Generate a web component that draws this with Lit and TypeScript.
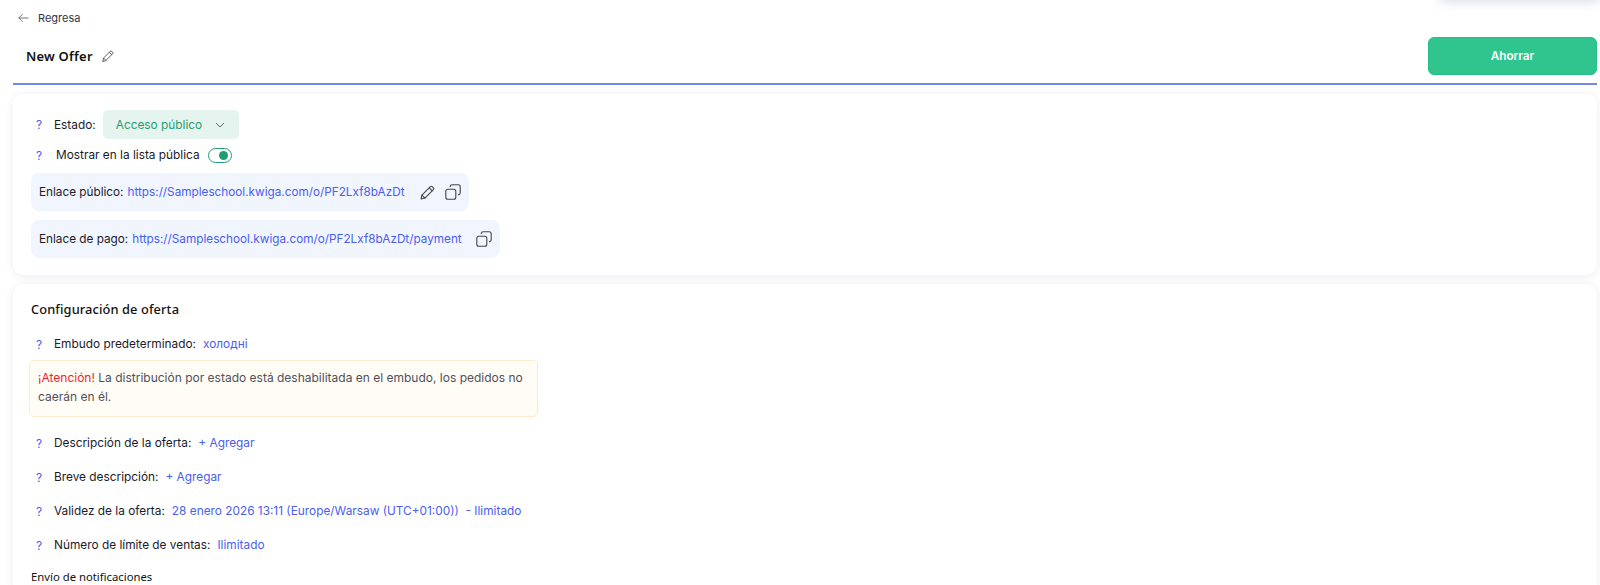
import { LitElement, html, css, svg } from 'lit';
import { customElement } from 'lit/decorators.js';

const pencil = (size: number) => html`<svg class="ico" width=${size} height=${size} viewBox="1 1 14 14" fill="none" stroke="currentColor" stroke-width="1" stroke-linejoin="round" stroke-linecap="round">
  ${svg`<path d="M2 14l.8-3.6 7.9-7.9a1.2 1.2 0 0 1 1.7 0l1.1 1.1a1.2 1.2 0 0 1 0 1.7l-7.9 7.9z"/><path d="M9.6 3.6l2.8 2.8"/><path d="M2.8 10.4l2.8 2.8"/>`}
</svg>`;

const copy = html`<svg class="ico" width="16" height="16" viewBox="0 0 16 16" fill="none" stroke="currentColor" stroke-width="1.1" stroke-linejoin="round">
  ${svg`<rect x="0.8" y="5.2" width="10" height="10" rx="2"/><path d="M5.2 3V2.6a2 2 0 0 1 2-1.8h6a2 2 0 0 1 2 2v6a2 2 0 0 1-1.8 2H13"/>`}
</svg>`;

@customElement('app-root')
export class AppRoot extends LitElement {
  static styles = css`
    :host {
      display: block;
      position: relative;
      height: 585px;
      overflow: hidden;
      background: #fff;
      font-family: Inter, 'Liberation Sans', sans-serif;
      font-size: 11.85px;
      color: #1b1b2a;
    }
    .popup {
      position: absolute;
      right: 0;
      top: -40px;
      width: 160px;
      height: 40px;
      box-shadow: 0 2px 10px rgba(90, 110, 170, 0.22);
    }
    .back {
      display: flex;
      align-items: center;
      gap: 9px;
      height: 35px;
      padding-left: 18px;
      font-size: 11px;
      color: #33333f;
    }
    .head {
      display: flex;
      align-items: center;
      justify-content: space-between;
      height: 42px;
      margin: 0 3px 0 13px;
      padding: 0 0 6px 13px;
      border-bottom: 2px solid #7286f2;
    }
    .title {
      display: flex;
      align-items: center;
      gap: 9px;
      font-family: 'Noto Sans', sans-serif;
      font-size: 13px;
      font-weight: 600;
      color: #111;
      letter-spacing: 0.2px;
    }
    .title .ico { color: #444; }
    .save {
      width: 169px;
      height: 38px;
      box-sizing: border-box;
      border: 1px solid #27bd85;
      border-radius: 6px;
      background: #30c58e;
      color: #fff;
      font: 600 11.7px Inter, sans-serif;
      display: flex;
      align-items: center;
      justify-content: center;
    }
    .card {
      margin: 9px 3px 0 13px;
      border-radius: 10px;
      background: #fff;
      box-shadow: 0 1px 8px rgba(60, 70, 110, 0.1);
      padding-left: 18px;
    }
    .card.first {
      height: 181px;
      padding-top: 16px;
      box-sizing: border-box;
    }
    .row {
      display: flex;
      align-items: center;
    }
    .q {
      width: 23px;
      padding-left: 5px;
      box-sizing: border-box;
      color: #4a5ef0;
      font-size: 12px;
    }
    .status { height: 29px; }
    .select {
      display: flex;
      align-items: center;
      gap: 13px;
      height: 29px;
      margin-left: 7px;
      padding: 0 14px 0 13px;
      border-radius: 5px;
      background: #e6f4ef;
      color: #1f9e70;
    }
    .select svg { color: #55706a; }
    .public { height: 24px; margin-top: 4px; }
    .public .q { width: 25px; }
    .toggle {
      position: relative;
      width: 24px;
      height: 15px;
      margin-left: 8px;
      box-sizing: border-box;
      border: 1px solid #1f9e70;
      border-radius: 8px;
    }
    .toggle::after {
      content: '';
      position: absolute;
      right: 3px;
      top: 2px;
      width: 9px;
      height: 9px;
      border-radius: 50%;
      background: #1f9e70;
    }
    .links {
      display: flex;
      flex-direction: column;
      align-items: flex-start;
      gap: 9px;
      margin-top: 6px;
    }
    .link {
      display: flex;
      align-items: center;
      gap: 4px;
      height: 38px;
      padding: 0 8px 0 8px;
      border-radius: 8px;
      background: #f1f5fe;
      font-size: 11.75px;
    }
    a { color: #4a5ef0; text-decoration: none; white-space: pre; }
    .link .ico { display: block; color: #444; }
    .link .first-ico { margin-left: 11px; }
    .link .next-ico { margin-left: 6px; }
    .link .only-ico { margin-left: 10px; }
    .card.second {
      height: 310px;
      padding-top: 16px;
      box-sizing: border-box;
    }
    h2 {
      margin: 0;
      font-family: 'Noto Sans', sans-serif;
      font-size: 12.8px;
      font-weight: 500;
      color: #111;
      letter-spacing: 0.12px;
    }
    .opt { height: 18px; }
    .opt .label { margin-right: 7px; }
    .funnel { margin-top: 17px; }
    .alert {
      width: 509px;
      height: 57px;
      margin: 7px 0 17px -2px;
      padding: 8px;
      box-sizing: border-box;
      border: 1px solid #fdeccb;
      border-radius: 5px;
      background: #fffdf6;
      color: #50505c;
      font-size: 12px;
      line-height: 18.5px;
    }
    .alert b { color: #ee1c36; font-weight: 400; }
    .gap { margin-top: 16px; }
    .sub {
      margin-top: 15px;
      font-size: 11.3px;
      color: #111;
      font-family: 'Noto Sans', sans-serif;
      line-height: 16px;
    }
  `;

  private option(label: string, value: string, extra = '') {
    return html`<div class="row opt ${extra}">
      <span class="q">?</span><span class="label">${label}</span><a>${value}</a>
    </div>`;
  }

  render() {
    return html`
      <div class="popup"></div>
      <div class="back">
        <svg width="11" height="10" viewBox="0 0 11 10" fill="none" stroke="#666" stroke-width="0.9">
          <path d="M10.5 5H.8M4.6 1.2L.8 5l3.8 3.8" />
        </svg>
        Regresa
      </div>
      <div class="head">
        <div class="title">New Offer ${pencil(12)}</div>
        <div class="save">Ahorrar</div>
      </div>
      <div class="card first">
        <div class="row status">
          <span class="q">?</span>Estado:
          <div class="select">
            Acceso público
            <svg width="10" height="6" viewBox="0 0 10 6" fill="none" stroke="currentColor" stroke-width="1"><path d="M1 1l4 4 4-4" /></svg>
          </div>
        </div>
        <div class="row public">
          <span class="q">?</span>Mostrar en la lista pública
          <span class="toggle"></span>
        </div>
        <div class="links">
          <div class="link">
            <span>Enlace público:</span><a>https://Sampleschool.kwiga.com/o/PF2Lxf8bAzDt</a>
            <span class="first-ico">${pencil(15)}</span>
            <span class="next-ico">${copy}</span>
          </div>
          <div class="link">
            <span>Enlace de pago:</span><a>https://Sampleschool.kwiga.com/o/PF2Lxf8bAzDt/payment</a>
            <span class="only-ico">${copy}</span>
          </div>
        </div>
      </div>
      <div class="card second">
        <h2>Configuración de oferta</h2>
        ${this.option('Embudo predeterminado:', 'холодні', 'funnel')}
        <div class="alert"><b>¡Atención!</b> La distribución por estado está deshabilitada en el embudo, los pedidos no caerán en él.</div>
        ${this.option('Descripción de la oferta:', '+ Agregar')}
        ${this.option('Breve descripción:', '+ Agregar', 'gap')}
        ${this.option('Validez de la oferta:', '28 enero 2026 13:11 (Europe/Warsaw (UTC+01:00))  - Ilimitado', 'gap')}
        ${this.option('Número de límite de ventas:', 'Ilimitado', 'gap')}
        <div class="sub">Envío de notificaciones</div>
      </div>
    `;
  }
}
